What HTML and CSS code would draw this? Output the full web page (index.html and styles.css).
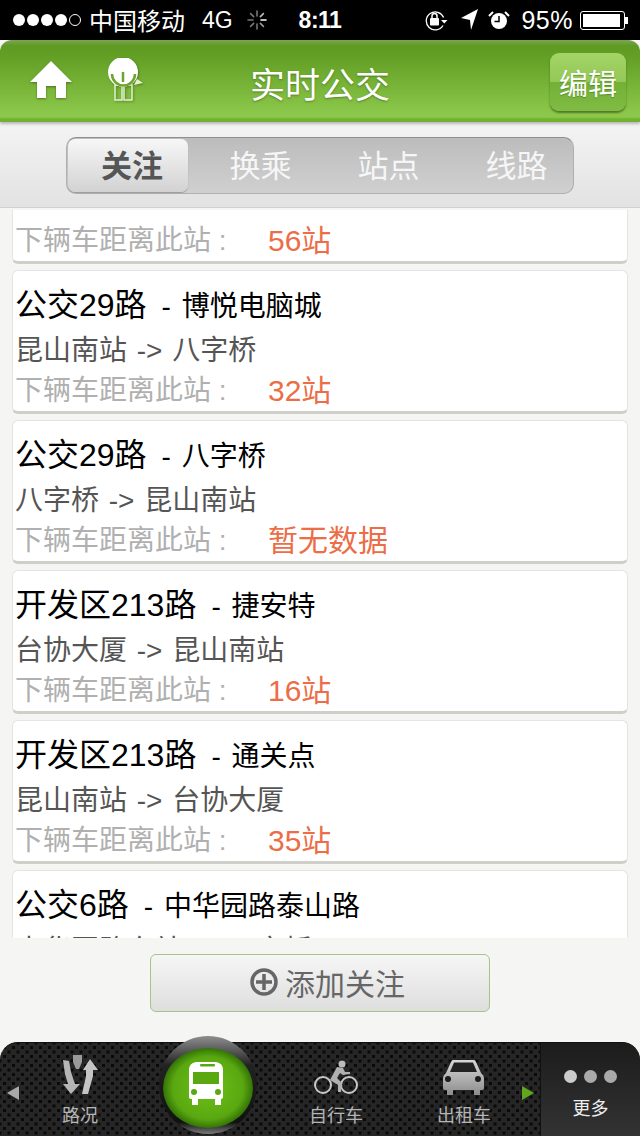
FILE: index.html
```html
<!DOCTYPE html>
<html lang="zh-CN">
<head>
  <meta charset="UTF-8">
  <meta name="viewport" content="width=device-width, initial-scale=1.0">
  <title>实时公交</title>
  <link rel="stylesheet" href="styles.css">
</head>
<body>
  <div class="statusbar">
    <div class="status-left">
      <span class="signal">
        <i></i><i></i><i></i><i></i><i class="empty"></i>
      </span>
      <span class="carrier">中国移动</span>
      <span class="network">4G</span>
      <svg class="spinner" width="20" height="20" viewBox="0 0 20 20" stroke-width="1.6" stroke-linecap="round">
        <path stroke="#777" d="M10 1v5M3.6 3.6l3 3M1 10h5M3.6 16.4l3-3M10 19v-5"/>
        <path stroke="#999" d="M16.4 16.4l-3-3"/>
        <path stroke="#bbb" d="M16.4 3.6l-3 3"/>
        <path stroke="#fff" d="M19 10h-5"/>
      </svg>
    </div>
    <div class="status-time">8:11</div>
    <div class="status-right">
      <svg class="lock-icon" width="24" height="22" viewBox="0 0 24 22">
        <path d="M18 16.500a9 9 0 1 1 .6-8" fill="none" stroke="#fff" stroke-width="1.300"/>
        <path d="M16 11h6.500l-3.200 3.500z" fill="#fff"/>
        <rect x="5" y="9" width="9" height="7.500" rx="1" fill="#fff"/>
        <path d="M7 9V7a2.500 2.500 0 0 1 5 0v2" fill="none" stroke="#fff" stroke-width="1.500"/>
      </svg>
      <svg width="18" height="22" viewBox="0 0 18 22">
        <path d="M17 0L0 9l9 2 1 10z" fill="#fff"/>
      </svg>
      <svg width="22" height="20" viewBox="0 0 22 20">
        <circle cx="11" cy="11" r="8" fill="#fff"/>
        <path d="M11 6v5.500H6.500" fill="none" stroke="#000" stroke-width="1.500"/>
        <path d="M1 6l4-4M21 6l-4-4" stroke="#fff" stroke-width="2"/>
      </svg>
      <span class="percent">95%</span>
      <span class="battery"><i></i></span>
    </div>
  </div>

  <header class="header">
    <div class="header-icons">
      <svg class="home-icon" width="44" height="40" viewBox="0 0 44 40">
        <path d="M22 1l21 21h-6v16H27V26h-10v12H8V22H1z" fill="#fff"/>
      </svg>
      <svg class="logo-icon" width="42" height="46" viewBox="0 0 42 46">
        <path d="M10 27h7v15h-7zM19 27h8v15h-8z" fill="none" stroke="#e4f2d0" stroke-width="1.500"/>
        <circle cx="18" cy="14" r="15" fill="#fff"/>
        <path d="M32 21l6 4-9 2z" fill="#e4f2d0"/>
        <path d="M7 16a11.500 11.500 0 0 0 23 0" fill="none" stroke="#6ea52c" stroke-width="2.500"/>
        <path d="M18 14v10" stroke="#6ea52c" stroke-width="2.500"/>
      </svg>
    </div>
    <h1>实时公交</h1>
    <button class="edit-btn">编辑</button>
  </header>

  <div class="tabs-wrap">
    <div class="tabs">
      <div class="tab active">关注</div>
      <div class="tab">换乘</div>
      <div class="tab">站点</div>
      <div class="tab">线路</div>
    </div>
  </div>

  <div class="list">
    <div class="card card-cut">
      <div class="next"><span class="next-label">下辆车距离此站 :</span><span class="next-value">56站</span></div>
    </div>
    <div class="card">
      <div class="title">公交29路<small>- 博悦电脑城</small></div>
      <div class="route">昆山南站 -&gt; 八字桥</div>
      <div class="next"><span class="next-label">下辆车距离此站 :</span><span class="next-value">32站</span></div>
    </div>
    <div class="card">
      <div class="title">公交29路<small>- 八字桥</small></div>
      <div class="route">八字桥 -&gt; 昆山南站</div>
      <div class="next"><span class="next-label">下辆车距离此站 :</span><span class="next-value">暂无数据</span></div>
    </div>
    <div class="card">
      <div class="title">开发区213路<small>- 捷安特</small></div>
      <div class="route">台协大厦 -&gt; 昆山南站</div>
      <div class="next"><span class="next-label">下辆车距离此站 :</span><span class="next-value">16站</span></div>
    </div>
    <div class="card">
      <div class="title">开发区213路<small>- 通关点</small></div>
      <div class="route">昆山南站 -&gt; 台协大厦</div>
      <div class="next"><span class="next-label">下辆车距离此站 :</span><span class="next-value">35站</span></div>
    </div>
    <div class="card">
      <div class="title">公交6路<small>- 中华园路泰山路</small></div>
      <div class="route">中华园路东站 -&gt; 八字桥</div>
    </div>
  </div>

  <div class="add-wrap">
    <button class="add-btn">
      <svg width="30" height="30" viewBox="0 0 30 30" fill="none" stroke="#666" stroke-width="3.500">
        <circle cx="15" cy="15" r="12"/>
        <path d="M15 7v16M7 15h16"/>
      </svg>
      添加关注
    </button>
  </div>

  <nav class="tabbar">
    <span class="arrow-left"></span>
    <div class="tabbar-item">
      <svg width="44" height="46" viewBox="0 0 44 46">
        <path d="M5 9l6 1 2 11 4 12h5l-9 10-8-10h5l-3-10z" fill="#b5b5b5"/>
        <path d="M15 4h9v7l-3 7h-3l-3-7z" fill="#9a9a9a"/>
        <path d="M32 8l8 11h-5v6l-5 18h-6l4-18v-6h-3z" fill="#c4c4c4"/>
      </svg>
      <span>路况</span>
    </div>
    <div class="tabbar-slot"></div>
    <div class="tabbar-item">
      <svg width="46" height="38" viewBox="0 0 46 38">
        <circle cx="10" cy="26" r="8" fill="none" stroke="#c8c8c8" stroke-width="2"/>
        <circle cx="36" cy="26" r="8" fill="none" stroke="#c8c8c8" stroke-width="2"/>
        <circle cx="29" cy="5" r="3.500" fill="#bbb"/>
        <path d="M24 8l6 1 2 4h5v2l-7 1-3-2-3 5 5 5-1 9h-3v-7l-8-5z" fill="#b0b0b0"/>
      </svg>
      <span>自行车</span>
    </div>
    <div class="tabbar-item">
      <svg width="44" height="38" viewBox="0 0 44 38">
        <defs>
          <linearGradient id="carGrad" x1="0" y1="0" x2="0" y2="1">
            <stop offset="0" stop-color="#d8d8d8"/>
            <stop offset="1" stop-color="#8c8c8c"/>
          </linearGradient>
        </defs>
        <path d="M11 1h21q1 0 2 2l5 11q3 2 3 6v9q0 2-2 2h-2v5h-6v-5H11v5H5v-5H3q-2 0-2-2v-9q0-4 3-6L9 3q1-2 2-2z" fill="url(#carGrad)"/>
        <path d="M12 3.500h19l4 9.500H8z" fill="#222"/>
        <circle cx="6" cy="20" r="3" fill="#1c1c1c"/>
        <circle cx="36" cy="20" r="3" fill="#1c1c1c"/>
      </svg>
      <span>出租车</span>
    </div>
    <span class="arrow-right"></span>
    <div class="tabbar-more">
      <div class="more-dots"><i></i><i></i><i></i></div>
      <span>更多</span>
    </div>
    <svg class="bus-btn" width="100" height="104" viewBox="0 0 100 104">
      <defs>
        <linearGradient id="capGrad" x1="0" y1="0" x2="0" y2="1">
          <stop offset="0" stop-color="#8e8e8e"/>
          <stop offset="0.16" stop-color="#555"/>
          <stop offset="0.3" stop-color="#222"/>
          <stop offset="0.88" stop-color="#111"/>
          <stop offset="1" stop-color="#7c7c7c"/>
        </linearGradient>
        <radialGradient id="greenGrad" cx="0.5" cy="0.5" r="0.52">
          <stop offset="0" stop-color="#6cc018"/>
          <stop offset="0.75" stop-color="#5aa810"/>
          <stop offset="1" stop-color="#2c6a06"/>
        </radialGradient>
      </defs>
      <circle cx="50" cy="51" r="49" fill="url(#capGrad)"/>
      <ellipse cx="50" cy="54" rx="45" ry="40" fill="url(#greenGrad)"/>
      <path d="M31 36q0-7 7-8h20q7 1 7 8v27q0 2-2 2v6h-6v-6H40v6h-6v-6q-3 0-3-2z" fill="#fff"/>
      <rect x="35" y="38" width="26" height="12" fill="#5aa810"/>
      <rect x="42" y="30" width="15" height="2.500" rx="1" fill="#5aa810"/>
      <circle cx="36" cy="58" r="3" fill="#5aa810"/>
      <circle cx="60" cy="58" r="3" fill="#5aa810"/>
    </svg>
  </nav>
</body>
</html>
```

FILE: styles.css
```css
* {
  margin: 0;
  padding: 0;
  box-sizing: border-box;
}

body {
  width: 640px;
  height: 1136px;
  overflow: hidden;
  display: flex;
  flex-direction: column;
  font-family: "Liberation Sans", "Noto Sans CJK SC", sans-serif;
  background: #f5f5f3;
}

/* status bar */
.statusbar {
  height: 40px;
  flex: none;
  background: #000;
  color: #fff;
  display: grid;
  grid-template-columns: 1fr auto 1fr;
  align-items: center;
  font-size: 24px;
}

.status-left {
  display: flex;
  align-items: center;
  padding-left: 13px;
}

.signal {
  display: flex;
  gap: 2px;
  margin-right: 8px;
}

.signal i {
  width: 12px;
  height: 12px;
  border-radius: 50%;
  background: #fff;
}

.signal i.empty {
  background: none;
  border: 1px solid #fff;
}

.carrier {
  padding-bottom: 2px;
}

.network {
  margin-left: 17px;
  margin-right: 14px;
  font-size: 23px;
}

.status-time {
  font-weight: bold;
  font-size: 23px;
  letter-spacing: -0.5px;
}

.status-right {
  display: flex;
  align-items: center;
  justify-content: flex-end;
  gap: 9px;
  padding-right: 15px;
}

.lock-icon {
  margin-right: 3px;
}

.percent {
  margin-left: 2px;
  margin-right: -2px;
  font-size: 25px;
  letter-spacing: 0.5px;
}

.battery {
  position: relative;
  width: 45px;
  height: 19px;
  border: 1px solid #fff;
  border-radius: 3px;
  padding: 2px;
}

.battery::after {
  content: "";
  position: absolute;
  right: -4px;
  top: 5px;
  width: 3px;
  height: 7px;
  background: #fff;
}

.battery i {
  display: block;
  height: 100%;
  width: 95%;
  background: #fff;
}

/* header */
.header {
  position: relative;
  height: 82px;
  flex: none;
  padding-top: 2px;
  background: linear-gradient(#79a652 0, #5f9a22 6px, #63a025 18px, #8cc84b 74px, #8cc84b 77px, #73b22e 79px, #73b22e 82px);
  border-radius: 12px 12px 0 0;
  display: flex;
  align-items: center;
  justify-content: center;
  box-shadow: 0 2px 3px rgba(0, 0, 0, 0.25);
  z-index: 2;
}

.header h1 {
  font-size: 35px;
  font-weight: normal;
  color: #fff;
  text-shadow: 0 1px 2px rgba(60, 90, 20, 0.6);
}

.header-icons {
  position: absolute;
  left: 29px;
  top: 20px;
  display: flex;
  gap: 32px;
}

.home-icon {
  filter: drop-shadow(0 1px 1px rgba(60, 90, 20, 0.7));
}

.logo-icon {
  margin-top: -2px;
  filter: drop-shadow(1px 1px 1px rgba(60, 90, 20, 0.6));
}

.edit-btn {
  position: absolute;
  right: 14px;
  top: 13px;
  width: 76px;
  height: 58px;
  border: none;
  border-radius: 9px;
  background: linear-gradient(#a3d466 0, #93c858 50%, #72b036 50%, #80bc45 100%);
  box-shadow: 0 2px 2px rgba(60, 90, 20, 0.7);
  color: #fff;
  font-family: inherit;
  font-size: 29px;
  text-shadow: 0 1px 1px rgba(60, 90, 20, 0.5);
}

/* tabs */
.tabs-wrap {
  height: 86px;
  flex: none;
  padding: 15px 66px 0;
  background: linear-gradient(#f4f4f4, #e2e2e2);
  border-bottom: 1px solid #d0d0d0;
}

.tabs {
  height: 57px;
  padding: 1px;
  display: grid;
  grid-template-columns: 120px 1fr 1fr 1fr;
  background: linear-gradient(#bcbcbc, #d0d0d0);
  border: 1px solid #b0b0b0;
  border-top-color: #8f8f8f;
  border-radius: 10px;
}

.tab {
  display: flex;
  align-items: center;
  justify-content: center;
  padding: 0 0 4px 17px;
  font-size: 31px;
  color: #f6f6f6;
}

.tab.active {
  padding-left: 8px;
  border-radius: 7px;
  background: linear-gradient(#f7f7f7, #d2d2d2);
  box-shadow: 0 1px 1px #999;
  color: #555;
  font-weight: bold;
}

/* list */
.list {
  flex: 1;
  min-height: 0;
  overflow: hidden;
  padding: 0 12px;
}

.card {
  height: 144px;
  margin-bottom: 6px;
  padding: 14px 2px 0;
  background: #fff;
  border: 1px solid #e4e4e2;
  border-bottom: 3px solid #cfcfca;
  border-radius: 6px;
}

.card-cut {
  height: 54px;
  margin-top: 2px;
  padding-top: 11px;
  border-top: none;
  border-radius: 0 0 6px 6px;
}

.title {
  height: 42px;
  line-height: 40px;
  font-size: 32px;
  color: #000;
  white-space: nowrap;
}

.title small {
  margin-left: 15px;
  font-size: 28px;
  word-spacing: 3px;
}

.route {
  height: 44px;
  line-height: 47px;
  font-size: 28px;
  word-spacing: 2px;
  color: #555;
  white-space: nowrap;
}

.next {
  height: 40px;
  line-height: 40px;
  display: flex;
  align-items: center;
  white-space: nowrap;
}

.next-label {
  width: 253px;
  font-size: 28px;
  color: #b0b0b0;
}

.next-value {
  font-size: 30px;
  color: #ec6d46;
}

/* add button */
.add-wrap {
  height: 104px;
  flex: none;
  padding-top: 16px;
  display: flex;
  justify-content: center;
  align-items: flex-start;
}

.add-btn {
  width: 340px;
  height: 58px;
  display: flex;
  align-items: center;
  justify-content: center;
  gap: 6px;
  padding: 0 0 2px 14px;
  border: 1px solid #a5c488;
  border-radius: 6px;
  background: linear-gradient(#f6f6f6, #dedede);
  color: #666;
  font-family: inherit;
  font-size: 30px;
}

/* bottom bar */
.tabbar {
  position: relative;
  height: 94px;
  flex: none;
  display: flex;
  padding-left: 16px;
  border-top: 1px solid #111;
  border-radius: 18px 18px 0 0;
  background-color: #262626;
  background-image:
    radial-gradient(circle, #0a0a0a 1.5px, transparent 2px),
    radial-gradient(circle, #0a0a0a 1.5px, transparent 2px);
  background-size: 9px 9px;
  background-position: 0 0, 4.500px 4.500px;
  color: #b5b5b5;
  font-size: 18px;
}

.tabbar-item {
  width: 128px;
  display: flex;
  flex-direction: column;
  align-items: center;
  justify-content: flex-end;
  gap: 4px;
  padding-bottom: 9px;
}

.tabbar-slot {
  width: 128px;
}

.tabbar-more {
  margin-left: auto;
  width: 100px;
  display: flex;
  flex-direction: column;
  align-items: center;
  justify-content: flex-end;
  gap: 11px;
  padding-bottom: 16px;
  background: linear-gradient(#1c1c1c, #333);
  border-left: 1px solid #111;
  border-radius: 0 18px 0 0;
  color: #eee;
}

.more-dots {
  display: flex;
  gap: 7px;
}

.more-dots i {
  width: 13px;
  height: 13px;
  border-radius: 50%;
  background: #ccc;
}

.more-dots i + i {
  background: #aaa;
}

.arrow-left,
.arrow-right {
  position: absolute;
  top: 43px;
  border-style: solid;
  border-color: transparent;
  border-width: 7px 0;
}

.arrow-left {
  left: 7px;
  border-right: 12px solid #aaa;
}

.arrow-right {
  left: 522px;
  border-left: 12px solid #5fa51d;
}

.bus-btn {
  position: absolute;
  left: 158px;
  top: -9px;
}
```
